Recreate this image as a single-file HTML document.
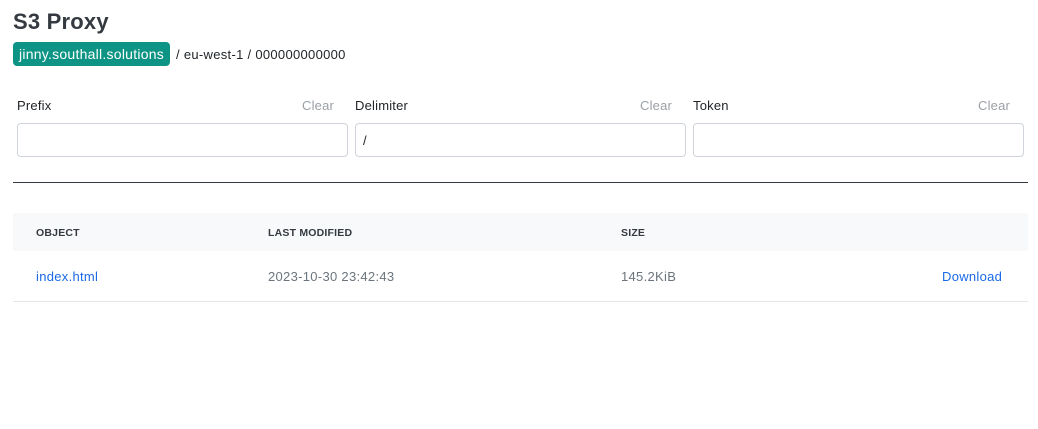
<!DOCTYPE html>
<html><head><style>
body{margin:0;background:#fff;font-family:"Liberation Sans",sans-serif;color:#212529;width:1038px;height:429px;overflow:hidden;position:relative}
.a{position:absolute;white-space:nowrap}
h1{position:absolute;left:13px;top:5px;margin:0;font-size:22px;font-weight:bold;color:#343a40;line-height:34px;letter-spacing:0.2px}
.badge{left:13px;top:42px;height:24px;line-height:25px;padding:0 6px;background:#0e9484;color:#fff;border-radius:4px;font-size:14px;letter-spacing:0.25px}
.lbl{font-size:13px;color:#212529;letter-spacing:0.2px}
.clr{font-size:13px;color:#9aa0a6;letter-spacing:0.2px}
.inp{position:absolute;top:123px;height:34px;border:1px solid #ced4da;border-radius:4px;width:331px;box-sizing:border-box;font-size:13px;line-height:34px;padding-left:7px}
.th{font-size:10.5px;font-weight:bold;color:#343a40;top:227px;letter-spacing:0.2px}
.td{font-size:13px;top:269px;letter-spacing:0.3px}
</style></head><body>
<h1>S3 Proxy</h1>
<div class="a badge">jinny.southall.solutions</div>
<div class="a" style="left:176px;top:47px;font-size:13px;letter-spacing:0.3px">/ eu-west-1 / 000000000000</div>
<div class="a lbl" style="left:17px;top:98px">Prefix</div><div class="a clr" style="left:302px;top:98px">Clear</div>
<div class="a lbl" style="left:355px;top:98px">Delimiter</div><div class="a clr" style="left:640px;top:98px">Clear</div>
<div class="a lbl" style="left:693px;top:98px">Token</div><div class="a clr" style="left:978px;top:98px">Clear</div>
<div class="inp" style="left:17px"></div>
<div class="inp" style="left:355px">/</div>
<div class="inp" style="left:693px"></div>
<div class="a" style="left:13px;top:182px;width:1015px;height:1px;background:#343a40"></div>
<div class="a" style="left:13px;top:213px;width:1015px;height:38px;background:#f8f9fa"></div>
<div class="a th" style="left:36px">OBJECT</div>
<div class="a th" style="left:268px">LAST MODIFIED</div>
<div class="a th" style="left:621px">SIZE</div>
<div class="a td" style="left:36px;color:#1a6ae8">index.html</div>
<div class="a td" style="left:268px;color:#6c757d">2023-10-30 23:42:43</div>
<div class="a td" style="left:621px;color:#6c757d">145.2KiB</div>
<div class="a td" style="left:942px;color:#1a6ae8">Download</div>
<div class="a" style="left:13px;top:301px;width:1015px;height:1px;background:#e5e7ea"></div>
</body></html>
